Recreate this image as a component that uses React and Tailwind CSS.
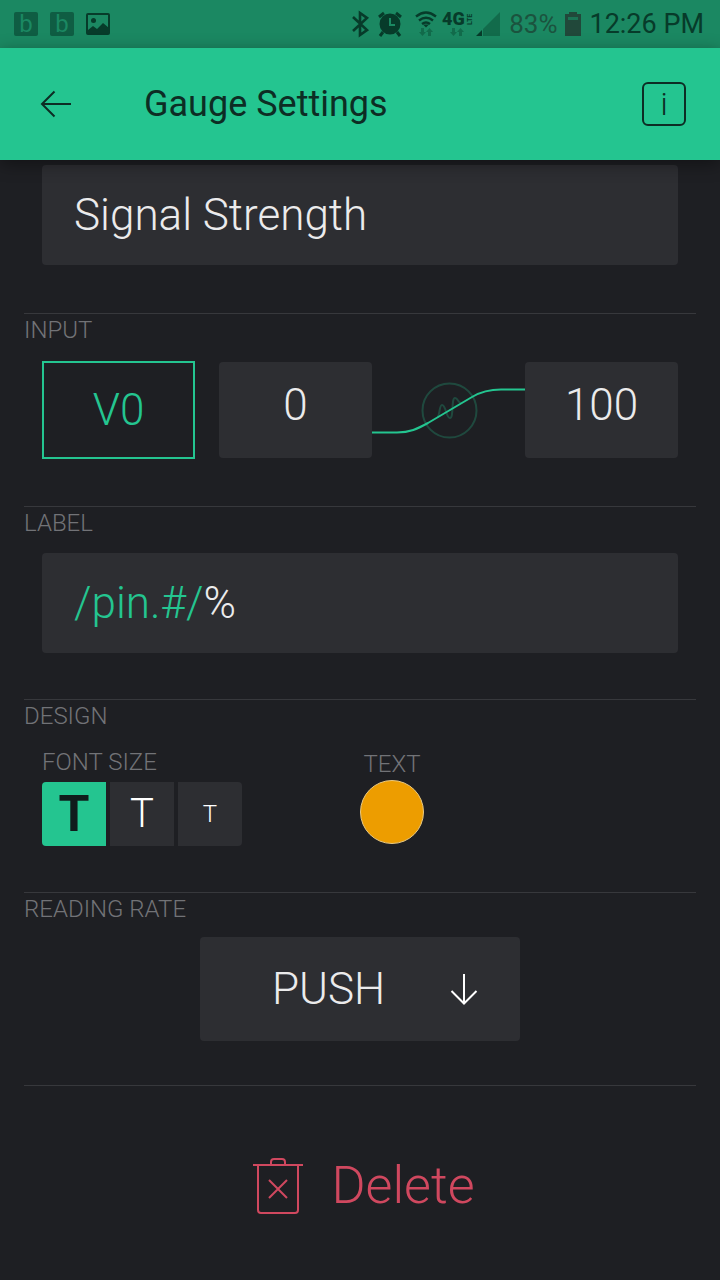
import React, { useState } from 'react';

const fontSizes = [
  { id: "large", label: "Large", text: "text-[50px] font-bold" },
  { id: "medium", label: "Medium", text: "text-[40px] font-light" },
  { id: "small", label: "Small", text: "text-2xl font-light" },
];

function DataArrows({ x }) {
  return (
    <path
      transform={`translate(${x} 28)`}
      d="M2 0h3v4h2L3.500 8 0 4h2zM9 8h3V4h2L10.500 0 7 4h2z"
      fill="#126b4b"
    />
  );
}

function StatusBar() {
  return (
    <div className="flex h-12 items-center justify-between bg-[#1b8862] pl-[14px] pr-4 text-[#073b2a]">
      <div className="flex items-center gap-3">
        {[1, 2].map((n) => (
          <span key={n} className="flex size-6 items-center justify-center rounded-xs bg-[#0f5d43] text-2xl leading-6 text-[#1b8862]">
            b
          </span>
        ))}
        <svg width="24" height="24" viewBox="0 0 24 24" aria-hidden="true">
          <rect x="1" y="2" width="22" height="20" rx="1" fill="none" stroke="currentColor" strokeWidth="2" />
          <circle cx="7.500" cy="8.500" r="2.500" fill="currentColor" />
          <path d="M2 18l5-4 4 3 6-6 6 5v6H2z" fill="currentColor" />
        </svg>
      </div>
      <div className="flex items-center gap-2 text-[27px]">
        <svg width="150" height="48" viewBox="0 0 150 48" aria-label="Bluetooth, alarm, Wi-Fi and 4G LTE">
          <path d="M2 17l14 13-7 5V13l7 5L2 31" fill="none" stroke="currentColor" strokeWidth="2.600" />
          <circle cx="39" cy="24" r="10.500" fill="currentColor" />
          <path d="M28 17l5-4M50 17l-5-4M32 32l-3 4M46 32l3 4" stroke="currentColor" strokeWidth="3" />
          <path d="M39 18v7h5" fill="none" stroke="#1b8862" strokeWidth="2" />
          <path d="M65 16.500Q75 8.500 85 16.500M68 20.500Q75 15 82 20.500M71 24Q75 21 79 24" fill="none" stroke="currentColor" strokeWidth="2.400" />
          <path d="M72 24.500h6l-3 3z" fill="currentColor" />
          <DataArrows x={68} />
          <text x="91" y="25" fill="currentColor" fontSize="18" fontWeight="900">4G</text>
          <text transform="translate(121 25) rotate(-90)" fill="currentColor" fontSize="7" fontWeight="700">LTE</text>
          <DataArrows x={99} />
          <path d="M125 36l6-6v6z" fill="currentColor" />
          <path d="M132 29l17-17v24h-17z" fill="#126b4b" />
        </svg>
        <span className="text-[26px] text-[#1b533e]">83%</span>
        <svg width="16" height="24" viewBox="0 0 16 24" aria-hidden="true">
          <path d="M4 0h8v2h4v22H0V2h4z" fill="#21483a" />
          <path d="M3 5h10v3H3z" fill="#1b7354" />
        </svg>
        <span>12:26 PM</span>
      </div>
    </div>
  );
}

function Section({ title, children }) {
  return (
    <section className="min-h-[193px] border-t border-[#37383c]">
      <h2 className="text-2xl leading-8 font-light text-[#727377]">{title}</h2>
      <div className="px-[18px]">{children}</div>
    </section>
  );
}

export default function App() {
  const [size, setSize] = useState("large");

  return (
    <div className="min-h-screen bg-[#1e1f23] font-['Roboto','Liberation_Sans',sans-serif] text-[#ebebec]">
      <StatusBar />
      <header className="relative flex h-28 items-center bg-[#24c590] px-[34px] text-[#0d2d24] shadow-[0_4px_16px_rgba(0,0,0,0.4)]">
        <button aria-label="Back" className="p-1.5">
          <svg width="32" height="28" viewBox="0 0 32 28" fill="none" stroke="currentColor" strokeWidth="2">
            <path d="M31 14H2M14.500 1.500L2 14l12.500 12.500" />
          </svg>
        </button>
        <h1 className="ml-[66px] flex-1 text-4xl font-normal">Gauge Settings</h1>
        <button aria-label="Info" className="flex size-11 items-center justify-center rounded-md border-2 border-current text-[32px] leading-none font-light">
          i
        </button>
      </header>

      <main className="px-6 pt-[5px]">
        <div className="px-[18px] pb-12">
          <input
            aria-label="Name"
            defaultValue="Signal Strength"
            className="h-[100px] w-full rounded-sm bg-[#2d2e32] px-8 text-[44px] font-light outline-none"
          />
        </div>

        <Section title="INPUT">
          <div className="flex items-center pt-[15px] text-[44px] font-light">
            <div className="mr-6 min-w-0 flex-1">
              <button className="block h-[98px] w-full border-2 border-[#24c590] text-[#24c590]">V0</button>
            </div>
            <input aria-label="Minimum" defaultValue="0" className="h-24 min-w-0 flex-1 rounded-sm bg-[#2d2e32] pb-2.5 text-center outline-none" />
            <svg className="h-24 min-w-0 flex-1" viewBox="0 0 153 96" preserveAspectRatio="none" fill="none" stroke="#24c590" strokeWidth="2" aria-hidden="true">
              <g opacity="0.25">
                <circle cx="77.500" cy="48.500" r="27" />
                <path d="M65 55C68 55 67 43 70 43C74 43 74 56 78 56C82 56 79 36 83 36C86 36 86 41 89 41" />
              </g>
              <path d="M0 70.500H25C38 70.500 45 67 56 61L100 35C110 29 119 27.500 129 27.500H153" />
            </svg>
            <input aria-label="Maximum" defaultValue="100" className="h-24 min-w-0 flex-1 rounded-sm bg-[#2d2e32] pb-2.5 text-center outline-none" />
          </div>
        </Section>

        <Section title="LABEL">
          <div className="pt-3.5">
            <label className="flex h-[100px] items-center rounded-sm bg-[#2d2e32] px-8 text-[44px] font-light">
              <span className="text-[#24c590]">/pin.#/</span>
              <input aria-label="Label suffix" defaultValue="%" className="min-w-0 flex-1 bg-transparent outline-none" />
            </label>
          </div>
        </Section>

        <Section title="DESIGN">
          <div className="grid grid-cols-2 text-2xl leading-8 font-light text-[#727377]">
            <fieldset className="pt-3.5">
              <legend className="float-left w-full">FONT SIZE</legend>
              <div className="clear-both flex gap-1 pt-1">
                {fontSizes.map((item) => (
                  <label
                    key={item.id}
                    className={`relative flex size-16 items-center justify-center first:rounded-l-sm last:rounded-r-sm ${item.text} ${size === item.id ? "bg-[#24c590] text-[#101c1c]" : "bg-[#2d2e32] text-white"}`}
                  >
                    <input
                      type="radio"
                      name="fontSize"
                      aria-label={item.label}
                      checked={size === item.id}
                      onChange={() => setSize(item.id)}
                      className="sr-only"
                    />
                    T
                  </label>
                ))}
              </div>
            </fieldset>
            <div className="flex w-16 flex-col items-center pt-4">
              <span id="text-color">TEXT</span>
              <button aria-labelledby="text-color" className="size-16 rounded-full border border-[#e9c983] bg-[#ed9d00]"></button>
            </div>
          </div>
        </Section>

        <Section title="READING RATE">
          <div className="relative mx-auto mt-3 w-80">
            <select aria-label="Reading rate" className="h-26 w-full appearance-none rounded-sm bg-[#2d2e32] pl-[72px] text-[44px] font-light outline-none">
              <option>PUSH</option>
            </select>
            <svg className="pointer-events-none absolute top-9 right-10" width="32" height="32" viewBox="0 0 32 32" fill="none" stroke="white" strokeWidth="2" aria-hidden="true">
              <path d="M16 1v29M3.500 18L16 30.500 28.500 18" />
            </svg>
          </div>
        </Section>

        <div className="flex justify-center border-t border-[#37383c] pt-16 pb-14">
          <button className="flex items-center gap-7 pl-2 text-[52px] leading-[72px] font-light text-[#d0485f]">
            <svg width="50" height="58" viewBox="0 0 50 58" fill="none" stroke="currentColor" strokeWidth="2" aria-hidden="true">
              <path d="M0 8h50M5 8v45q0 3 3 3h34q3 0 3-3V8M18 8V5q0-3 3-3h8q3 0 3 3v3M16 23l18 18M34 23L16 41" />
            </svg>
            Delete
          </button>
        </div>
      </main>
    </div>
  );
}
